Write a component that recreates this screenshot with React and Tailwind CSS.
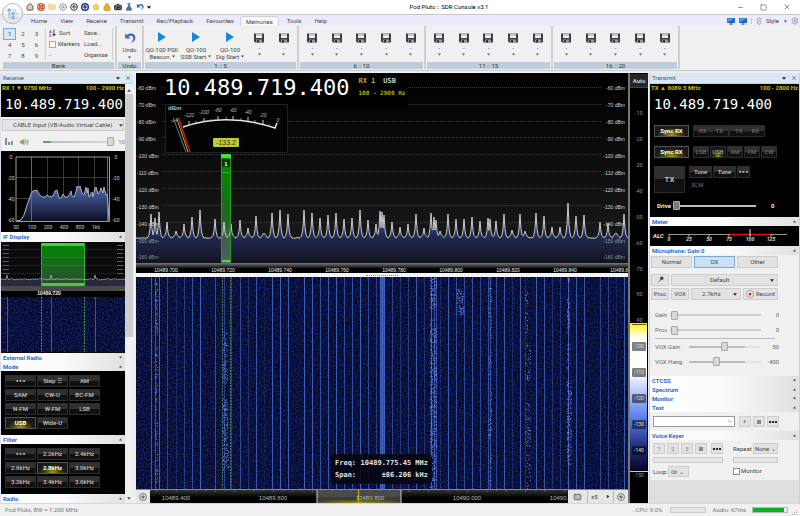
import { useState } from 'react'
import {
  Camera,
  CircleStop,
  FlaskConical,
  Folder,
  House,
  Keyboard,
  LifeBuoy,
  CirclePlay,
  CirclePlus,
  Lock,
  Minus,
  Settings,
  Square,
  Star,
  X,
} from 'lucide-react'

const MONO = "font-['DejaVu_Sans_Mono','Liberation_Mono',monospace]"

const tabs = ['Home', 'View', 'Receive', 'Transmit', 'Rec/Playback', 'Favourites', 'Memories', 'Tools', 'Help']

const modes = ['● ● ●', 'Step ☰', 'AM', 'SAM', 'CW-U', 'BC-FM', 'N-FM', 'W-FM', 'LSB', 'USB', 'Wide-U']
const filters = ['● ● ●', '2.2kHz', '2.4kHz', '2.6kHz', '2.8kHz', '3.0kHz', '3.2kHz', '3.4kHz', '3.6kHz']

// [x, height above the noise floor]
const peaks = [
  [15, 25], [19, 21], [23, 27], [31, 17], [40, 8], [48, 15], [56, 22], [64, 29], [79, 20], [88, 17],
  [95, 15], [104, 19], [112, 11], [120, 23], [128, 5], [136, 26], [144, 29], [152, 25], [168, 29], [176, 26],
  [184, 21], [192, 24], [200, 26], [208, 20], [216, 21], [224, 29], [232, 19], [240, 15], [244, 28], [246, 27],
  [248, 24], [256, 17], [264, 12], [272, 15], [280, 25], [288, 11], [295, 26], [298, 22], [300, 19], [304, 8],
  [312, 25], [320, 20], [328, 20], [336, 22], [344, 18], [352, 21], [354, 20], [360, 18], [368, 25], [376, 9],
  [384, 25], [389, 8], [400, 26], [408, 23], [416, 12], [424, 12], [432, 36], [440, 23], [448, 24], [464, 17],
  [472, 16], [480, 6], [488, 25],
]

const bandwidth = [
  [16, 70], [21, 69], [24, 64], [27, 54], [31, 43], [33, 40], [37, 39], [39, 43], [42, 46], [45, 46],
  [47, 44], [50, 46], [53, 45], [55, 40], [57, 39], [59, 47], [61, 47], [63, 43], [65, 46], [68, 46],
  [71, 40], [72, 45], [74, 46], [76, 41], [77, 35], [79, 37], [80, 35], [82, 42], [84, 44], [86, 36],
  [87, 42], [88, 37], [89, 46], [92, 41], [93, 46], [95, 37], [96, 36], [98, 43], [100, 40], [101, 37],
  [103, 42], [104, 36], [106, 44], [107, 43], [108, 52], [109, 70],
]

function random(seed) {
  let s = seed
  return () => {
    s = (s * 16807) % 2147483647
    return s / 2147483647
  }
}

function spectrumTrace() {
  const rnd = random(91)
  const points = []
  for (let x = 0; x <= 492; x++) {
    let up = rnd() * 1.6
    peaks.forEach(([px, h]) => {
      const d = Math.abs(x - px)
      up = Math.max(up, h * Math.exp(-d * 0.9), 5 * Math.exp(-(d * d) / 8) + rnd() * 0.8)
    })
    points.push(`${x},${(166 - up).toFixed(1)}`)
  }
  return points.join(' ')
}

// bursts of voice and data signals: [x, width, top, bottom, density]
const bursts = [
  [19, 3, 2, 60, 0.6], [19, 3, 70, 135, 0.4], [19, 3, 145, 206, 0.5],
  [87, 5, 54, 108, 0.5], [87, 5, 122, 170, 0.6], [87, 6, 170, 194, 0.6],
  [294, 7, 0, 32, 0.6], [294, 7, 42, 90, 0.6], [294, 7, 90, 212, 0.6],
  [321, 7, 12, 38, 0.6], [353, 3, 0, 212, 0.35], [389, 3, 14, 56, 0.4],
  [389, 6, 66, 104, 0.3], [389, 6, 126, 170, 0.4], [389, 6, 176, 212, 0.2],
  [431, 3, 0, 6, 0.8], [431, 3, 22, 58, 0.7], [431, 4, 66, 92, 0.5],
  [431, 5, 104, 188, 0.6],
]

function speckles() {
  const rnd = random(17)
  const out = []
  bursts.forEach(([x, w, top, bottom, density]) => {
    for (let y = top; y < bottom; y++) {
      for (let i = 0; i < w; i++) {
        if (rnd() < density * 0.75) {
          out.push({ x: x + i, y, o: (0.15 + rnd() * 0.65).toFixed(2) })
        }
      }
    }
  })
  return out
}

const trace = spectrumTrace()
const dots = speckles()

function Caret({ className = '' }) {
  return (
    <svg viewBox="0 0 6 4" className={`w-1 h-[3px] shrink-0 ${className}`}>
      <path d="M0 0h6L3 4z" fill="currentColor" />
    </svg>
  )
}

function Disk() {
  return (
    <svg viewBox="0 0 20 20" className="w-[10px] h-[10px]">
      <path d="M0 1h20v18H2l-2-2z" fill="#3e3e40" />
      <path d="M4 1h12v9H4z" fill="#b9cad8" />
      <path d="M4 6h12v4H4z" fill="#eef3f6" />
      <path d="M4 13h12v6H4z" fill="#9a9a9a" />
      <path d="M6 14h4v5H6z" fill="#333" />
    </svg>
  )
}

function UndoArrow({ className }) {
  return (
    <svg viewBox="0 0 20 20" className={className}>
      <path d="M2 2v9h9L7.500 7.500C12 4.500 16 7 15.500 11c-.2 3-2 5-4 7 5-2 7.500-5 7.500-9C19 3 11 0 5 5z" fill="#3568cf" />
    </svg>
  )
}

function TitleBar() {
  const icon = 'w-2 h-2'
  return (
    <header className="flex items-center h-[14px] bg-white pl-[26px] text-black">
      <div className="flex items-center gap-[3px]">
        <button aria-label="Home"><House className={icon} color="#6b5144" fill="#d9cfc8" strokeWidth={3} /></button>
        <button aria-label="Help"><LifeBuoy className={icon} color="#d4552a" strokeWidth={4} /></button>
        <button aria-label="Open"><Folder className={icon} color="#edcf82" fill="#f7dc9a" /></button>
        <button aria-label="Start"><CirclePlay className={icon} color="#666" /></button>
        <button aria-label="Stop">
          <CircleStop className={icon} color="#333" strokeWidth={3} />
        </button>
        <button aria-label="Add"><CirclePlus className={icon} color="#3338a8" strokeWidth={5} /></button>
        <button aria-label="Favourite"><Star className={icon} color="#eda02c" fill="#fbd35c" /></button>
        <button aria-label="Lock"><Lock className={icon} color="#cf9a26" fill="#e8b33c" strokeWidth={3} /></button>
        <button aria-label="Snapshot"><Camera className={icon} color="#222" fill="#777" strokeWidth={3} /></button>
        <button aria-label="Tests"><FlaskConical className={icon} color="#3f6ea6" fill="#3f6ea6" strokeWidth={2} /></button>
        <button aria-label="Undo"><UndoArrow className={icon} /></button>
        <Caret />
      </div>
      <h1 className="flex-1 text-center pl-[10px]">Pod Pluto :: SDR Console v3.1</h1>
      <div className="flex items-center gap-4 pr-[9px] text-[#555]">
        <button aria-label="Minimise"><Minus className="w-[7px] h-[7px]" /></button>
        <button aria-label="Maximise"><Square className="w-[7px] h-[7px]" /></button>
        <button aria-label="Close"><X className="w-2 h-2" /></button>
      </div>
    </header>
  )
}

function Screen() {
  return (
    <svg viewBox="0 0 16 14" className="w-2 h-[7px]">
      <path d="M0 0h16v10H0z" fill="#2268c8" />
      <path d="M1 1h14L1 8z" fill="#52a4f0" />
      <path d="M5 10h6v4H5z" fill="#888" />
    </svg>
  )
}

function TabBar({ active, onSelect }) {
  return (
    <nav className="flex items-end h-3 bg-[#ebebfb] border-t border-[#c4c4d2] pl-6">
      {tabs.map((tab) => (
        <button
          key={tab}
          onClick={() => onSelect(tab)}
          className={
            tab === active
              ? 'h-[10px] px-[5px] mr-px bg-[#f8f8f8] border border-b-0 border-[#d0d0da] rounded-t-sm'
              : 'h-[10px] pl-[7px] pr-[6px]'
          }
        >
          {tab}
        </button>
      ))}
      <div className="ml-auto flex items-center gap-1 h-[10px] pr-px">
        <Screen />
        <Screen />
        <span className="w-px h-[6px] bg-[#ccc]" />
        <svg viewBox="0 0 12 18" className="w-[6px] h-2" fill="none" stroke="#666">
          <path d="M2 7V4l4-3 4 3v3zM2 11v3l4 3 4-3v-3z" />
        </svg>
        <button className="flex items-center gap-[5px]">
          Style <Caret className="w-[3px] h-[2px]" />
        </button>
        <Settings className="w-2 h-2" color="#888" />
      </div>
    </nav>
  )
}

function Group({ title, children, className = '' }) {
  return (
    <section className={`flex flex-col border-r-2 border-[#cfcfcf] px-px ${className}`}>
      <div className="flex-1 flex pt-[2px]">{children}</div>
      <h2 className="h-[7px] leading-[7px] bg-[#bfccd9] text-center text-[#333]">{title}</h2>
    </section>
  )
}

function Slot({ label }) {
  if (!label) {
    return (
      <button aria-label="Empty memory" className="flex-1 flex flex-col items-center pt-[5px]">
        <Disk />
        <span className="h-2 leading-[8px] mt-px">-</span>
        <Caret className="mt-px w-[3px] h-[2px] text-[#555]" />
      </button>
    )
  }
  return (
    <button className="w-[34px] shrink-0 flex flex-col items-center pt-1">
      <svg viewBox="0 0 8 10" className="w-2 h-[10px]">
        <path d="M0 0l8 5-8 5z" fill="#1b87dc" />
      </svg>
      <span className="mt-1 h-[7px] leading-[7px] whitespace-nowrap">{label[0]}</span>
      <span className="flex items-center gap-[2px] h-[7px] leading-[7px] whitespace-nowrap">
        {label[1]} <Caret className="w-[3px] h-[2px]" />
      </span>
    </button>
  )
}

function Ribbon() {
  const [bank, setBank] = useState(1)
  return (
    <div className="flex h-[45px] bg-[#f0f0f0] border-b border-[#c6c6c6] pl-[2px] pb-px text-[#444]">
      <Group title="Bank" className="w-[115px]">
        <div className="grid grid-cols-3 w-10 h-[33px]">
          {[1, 2, 3, 4, 5, 6, 7, 8, 9].map((n) => (
            <button
              key={n}
              onClick={() => setBank(n)}
              className={n === bank ? 'border border-[#7da7d8] bg-[#d4e6f8]' : ''}
            >
              {n}
            </button>
          ))}
        </div>
        <div className="ml-[2px] pl-[3px] w-[37px] h-8 border-l border-[#d0d0d0] flex flex-col justify-between leading-[10px]">
          <button className="flex items-center gap-[3px]">
            <svg viewBox="0 0 14 16" className="w-[7px] h-2">
              <text x="0" y="7" fontSize="8" fontWeight="700" fill="#2b55b8">A</text>
              <text x="0" y="15" fontSize="8" fontWeight="700" fill="#b83030">Z</text>
              <path d="M9 1h2v9h3l-4 5-4-5h3z" fill="#444" />
            </svg>
            Sort
          </button>
          <label className="flex items-center gap-[2px]">
            <input type="checkbox" className="appearance-none w-[7px] h-[7px] border border-[#aaa] bg-white" />
            Markers
          </label>
          <span>-</span>
        </div>
        <div className="w-[31px] pl-[2px] h-8 border-r border-[#d0d0d0] flex flex-col items-start justify-between leading-[10px]">
          <button>Save...</button>
          <button>Load...</button>
          <button>Organise</button>
        </div>
      </Group>
      <Group title="Undo" className="w-[27px]">
        <button className="flex-1 flex flex-col items-center pt-1">
          <UndoArrow className="w-3 h-3" />
          <span className="mt-[2px] leading-[7px]">Undo</span>
          <Caret className="mt-[3px] w-[3px] h-[2px]" />
        </button>
      </Group>
      <Group title="1 :: 5" className="w-[155px]">
        <Slot label={['QO-100 PSK', 'Beacon']} />
        <Slot label={['QO-100', 'SSB Start']} />
        <Slot label={['QO-100', 'Dig Start']} />
        <Slot />
        <Slot />
      </Group>
      {['6 :: 10', '11 :: 15', '16 :: 20'].map((title) => (
        <Group key={title} title={title} className="w-[127px]">
          <Slot />
          <Slot />
          <Slot />
          <Slot />
          <Slot />
        </Group>
      ))}
    </div>
  )
}

function PanelTitle({ children }) {
  return (
    <div className="flex items-center h-[11px] px-[2px] bg-[#dbe7f2] border-b border-[#c9d3dd] text-[#456]">
      <h2 className="flex-1">{children}</h2>
      <button aria-label={`${children} options`}><Caret className="mr-[5px] text-[#222]" /></button>
      <button aria-label={`Close ${children}`}><X className="w-[6px] h-[6px]" color="#222" /></button>
    </div>
  )
}

function Heading({ children, down }) {
  return (
    <button className="flex items-center w-full h-[9px] pl-[2px] pr-[3px] bg-linear-to-r from-white via-[#fafafa] to-[#e0e0e0] text-[#2a6ad0] font-bold">
      <span className="flex-1 text-left">{children}</span>
      <Caret className={down ? 'w-[3px] h-[2px] text-[#444]' : 'w-[3px] h-[2px] text-[#444] rotate-180'} />
    </button>
  )
}

function DarkButton({ children, on, dim, className = '' }) {
  let look = 'bg-linear-to-b from-[#303030] from-50% to-[#111] to-50% border-[#2c2c2c]'
  if (on) look = 'bg-[radial-gradient(ellipse_at_bottom,#b0a800_0%,#4a4700_35%,#191919_65%)] border-[#555]'
  if (on && dim) look = 'bg-[radial-gradient(ellipse_at_bottom,#b0a800_0%,#4a4700_30%,#191919_60%)] border-[#2c2c2c]'
  let text = on ? 'text-white font-bold' : 'text-[#c8c8c8] font-medium'
  if (dim) text = on ? 'text-[#999] font-medium' : 'text-[#6a6a6a] font-medium'
  if (children === '● ● ●') text = 'text-[#e4e4e4] text-[4px]'
  return (
    <button className={`h-3 border leading-[10px] whitespace-nowrap ${text} ${look} ${className}`}>
      {children}
    </button>
  )
}

function GreyButton({ children, className = '', ...rest }) {
  return (
    <button
      className={`flex items-center justify-center h-3 border border-[#cdcdcd] bg-[#e2e2e2] ${className}`}
      {...rest}
    >
      {children}
    </button>
  )
}

function Ellipsis() {
  return (
    <svg viewBox="0 0 8 2" className="w-2 h-[2px]">
      <path d="M0 0h2v2H0zM3 0h2v2H3zM6 0h2v2H6z" fill="#222" />
    </svg>
  )
}

function Slider({ label, value, max = 100, track = 'from-[#fafafa] to-[#fafafa]', className = '', dark }) {
  return (
    <input
      type="range"
      aria-label={label}
      defaultValue={value}
      max={max}
      className={`appearance-none min-w-0 h-[9px] bg-transparent [&::-webkit-slider-runnable-track]:h-[2px] [&::-webkit-slider-runnable-track]:bg-linear-to-r [&::-webkit-slider-thumb]:appearance-none [&::-webkit-slider-thumb]:w-[7px] [&::-webkit-slider-thumb]:h-[9px] [&::-webkit-slider-thumb]:-mt-1 [&::-webkit-slider-thumb]:border [&::-webkit-slider-thumb]:rounded-[1px] ${
        dark
          ? '[&::-webkit-slider-runnable-track]:bg-[#bbb] [&::-webkit-slider-thumb]:bg-[#777] [&::-webkit-slider-thumb]:border-[#aaa]'
          : '[&::-webkit-slider-thumb]:bg-[#d9d9d9] [&::-webkit-slider-thumb]:border-[#a8a8a8]'
      } ${track} ${className}`}
    />
  )
}

function BandwidthPlot() {
  const line = bandwidth.map((p) => p.join(',')).join(' ')
  return (
    <svg viewBox="1 0 124 81" className="block w-full h-[81px] bg-black">
      <defs>
        <linearGradient id="bw" x1="0" y1="0" x2="0" y2="1">
          <stop offset="0" stopColor="#5068ae" />
          <stop offset="1" stopColor="#0c1024" />
        </linearGradient>
      </defs>
      <g stroke="#3a3a3a">
        {[47, 63, 78, 94].map((x) => <path key={x} d={`M${x + 0.5} 6V70`} />)}
        {[27, 48].map((y) => <path key={y} d={`M16 ${y - 0.5}H109`} />)}
      </g>
      <polygon points={line} fill="url(#bw)" />
      <path d="M31.500 6V70M107.500 6V70" stroke="#787400" />
      <polyline points={line} fill="none" stroke="#a9b0c0" />
      <path d="M16 6H109.500V70.500H16z" fill="none" stroke="#999" />
      <g fill="#ccc" fontSize="5" textAnchor="middle">
        {['0', '-20', '-40', '-60'].map((t, i) => (
          <g key={t}>
            <text x="11" y={8 + i * 21}>{t}</text>
            <text x="116" y={8 + i * 21}>{t}</text>
          </g>
        ))}
        {['50', '100', '200', '400', '800', '1k6'].map((t, i) => (
          <text key={t} x={16 + i * 16} y="78">{t}</text>
        ))}
      </g>
    </svg>
  )
}

function NoiseFilter({ id }) {
  return (
    <filter id={id} x="0" y="0" width="100%" height="100%" colorInterpolationFilters="sRGB">
      <feTurbulence type="fractalNoise" baseFrequency="0.7" numOctaves="2" seed="4" />
      <feColorMatrix values="0.2 0 0 0 -0.06  0.3 0 0 0 -0.08  0.7 0 0 0 -0.1  0 0 0 0 1" />
    </filter>
  )
}

function IfDisplay() {
  const rnd = random(5)
  const pts = []
  for (let x = 1; x <= 125; x++) {
    const near = [7, 51, 95].some((p) => Math.abs(p - x) < 1)
    pts.push(`${x},${near ? 33 : (38 - rnd() * 1.5).toFixed(1)}`)
  }
  return (
    <svg viewBox="1 0 124 111" preserveAspectRatio="none" className="block w-full h-[111px] bg-[#0a0a0a]">
      <defs>
        <linearGradient id="pass" x1="0" y1="0" x2="0" y2="1">
          <stop offset="0" stopColor="#008800" />
          <stop offset="1" stopColor="#2d4a34" />
        </linearGradient>
        <NoiseFilter id="ifNoise" />
      </defs>
      <g stroke="#333" strokeDasharray="1 1">
        {[7, 15, 23, 31].map((y) => <path key={y} d={`M1 ${y}.500H125`} />)}
      </g>
      <g stroke="#5c5c5c" strokeDasharray="1 3" strokeWidth="6">
        <path d="M6 3V34M120 3V34" />
      </g>
      <path d="M1 38H125V44H1z" fill="#252a42" />
      <path d="M41 1H85V44H41z" fill="url(#pass)" />
      <path d="M41 1H85V4H41zM41 41H85V44H41z" fill="#3fd03f" />
      <path d="M41.500 1V44M84.500 1V44" stroke="#35b035" />
      <path d="M41 15.500H85M41 23.500H85" stroke="#3c8a3c" strokeDasharray="1 1" />
      <polyline points={pts.join(' ')} fill="none" stroke="#aaa" strokeWidth="0.8" />
      <path d="M1 44H125V49H1z" fill="#4a4a4a" />
      <path d="M1 49H125V55H1z" fill="#000" />
      <text x="49" y="53" fontSize="5" fontWeight="700" fill="#eee" textAnchor="middle" fontFamily="Liberation Sans">10489.720</text>
      <rect x="1" y="55" width="124" height="55" filter="url(#ifNoise)" />
      <path d="M7.500 55V110M51.500 55V110M95.500 55V110" stroke="#38589a" />
      <path d="M41.500 55V110M84.500 55V110" stroke="#4a9a4a" strokeDasharray="2 1" />
    </svg>
  )
}

function ReceivePanel() {
  return (
    <aside className="w-[133px] shrink-0 flex flex-col border-l border-[#dde]">
      <PanelTitle>Receive</PanelTitle>
      <div className="flex-1 flex">
        <div className="flex-1 min-w-0 bg-[#f0f0f0]">
          <div className="h-[33px] bg-black overflow-hidden">
            <div className="flex justify-between h-2 px-px leading-[8px] font-bold whitespace-nowrap text-[#cfc000]">
              <span>RX 1 ▼ 9750 MHz</span>
              <span>100 - 2900 Hz</span>
            </div>
            <p className={`${MONO} mt-1 pl-1 text-[14px] leading-[16px] text-white`}>10.489.719.400</p>
          </div>

          {/* audio output */}
          <div className="h-[34px] pt-[2px] overflow-hidden">
            <div className="relative mx-px">
              <select aria-label="Output device" className="appearance-none w-full h-3 border border-[#c8c8c8] bg-[#e4e4e4] pl-[10px]">
                <option>CABLE Input (VB-Audio Virtual Cable)</option>
              </select>
              <Caret className="absolute right-px top-[5px]" />
            </div>
            <div className="flex items-center pl-1 pt-[6px]">
              <svg viewBox="0 0 9 7" className="w-[9px] h-[7px]" fill="#8a8a8a">
                <path d="M0 0h2v7H0zM3 4h2v3H3zM6 3h2v4H6z" />
              </svg>
              <svg viewBox="0 0 18 16" className="w-[9px] h-2 ml-[6px]">
                <path d="M0 5h4l5-4v14l-5-4H0z" fill="#a29878" />
                <path d="M11 4c2 3 2 5 0 8M14 2c3 4 3 8 0 12" fill="none" stroke="#58b858" strokeWidth="2" />
              </svg>
              <Slider
                label="Volume"
                value={98}
                className="w-[73px] ml-[14px]"
                track="[&::-webkit-slider-runnable-track]:from-[#5fa860] [&::-webkit-slider-runnable-track]:from-10% [&::-webkit-slider-runnable-track]:via-[#b8c0b8] [&::-webkit-slider-runnable-track]:via-12% [&::-webkit-slider-runnable-track]:to-[#dcdcdc]"
              />
              <span className="ml-[3px] text-[#888]">10</span>
            </div>
          </div>

          <BandwidthPlot />
          <div className="h-[10px]">
            <Heading>IF Display</Heading>
          </div>
          <IfDisplay />
          <Heading down>External Radio</Heading>
          <Heading>Mode</Heading>
          <div className="h-16 bg-black pt-1 pl-1">
            <div className="grid grid-cols-3 gap-x-px gap-y-[2px] w-[95px]">
              {modes.map((m) => (
                <DarkButton key={m} on={m === 'USB'}>{m}</DarkButton>
              ))}
            </div>
          </div>
          <Heading>Filter</Heading>
          <div className="h-[50px] bg-black pt-1 pl-1">
            <div className="grid grid-cols-3 gap-x-px gap-y-[2px] w-[95px]">
              {filters.map((f) => (
                <DarkButton key={f} on={f === '2.8kHz'}>{f}</DarkButton>
              ))}
            </div>
          </div>
          <Heading>Radio</Heading>
        </div>
        <div className="w-2 bg-[#f0f0f0] flex flex-col items-center text-[#555]">
          <Caret className="mt-[5px] rotate-180" />
          <div className="w-full h-[243px] mt-[2px] bg-[#cdcdcd]" />
          <Caret className="mt-auto mb-[3px]" />
        </div>
      </div>
    </aside>
  )
}

function Meter() {
  const marks = [
    ['-120', 53, 44, 52], ['-100', 68, 41, 49], ['-80', 82, 39, 47], ['-60', 97, 39, 47],
    ['-40', 112, 41, 48], ['-20', 127, 44, 51],
  ]
  return (
    <g>
      <path d="M29.500 31.500H151.500V79.500H29.500z" fill="#030303" stroke="#222" />
      <text x="32" y="37" fontSize="6" fontWeight="700" fill="#bbb">dBm</text>
      <g fontSize="5" fontStyle="italic" fill="#bbb" textAnchor="middle">
        <text x="38" y="49">-14</text>
        {marks.map(([t, x, y]) => <text key={t} x={x} y={y}>{t}</text>)}
        <text x="142" y="49">0</text>
      </g>
      <path d="M47 54Q91 39 139 55L141 50" fill="none" stroke="#e8e8e8" strokeWidth="1.500" />
      {marks.map(([t, x, , y]) => <path key={t} d={`M${x} ${y}v-4`} stroke="#ccc" />)}
      <path d="M60 50v-2M75 48v-2M90 46v-2M105 47v-2M119 49v-2M133 53v-2" stroke="#aaa" strokeWidth="0.800" />
      <path d="M38 47L50 79" stroke="#777" />
      <path d="M41 46L52 79" stroke="#b8b020" />
      <path d="M42.500 45L54 79" stroke="#d01818" strokeWidth="1.500" />
      <rect x="77" y="65" width="26" height="9" rx="1" fill="#bccb38" />
      <text x="90" y="72" fontSize="7" fill="#3c4210" textAnchor="middle">-133.2</text>
    </g>
  )
}

function Spectrum() {
  return (
    <div className="relative">
      <svg viewBox="0 0 492 200" preserveAspectRatio="none" className="block w-full h-[200px] font-['Liberation_Sans',sans-serif]">
        <defs>
          <linearGradient id="sky" x1="0" y1="0" x2="0" y2="1">
            <stop offset="0" stopColor="#000" />
            <stop offset="1" stopColor="#1c1c1c" />
          </linearGradient>
          <linearGradient id="floor" gradientUnits="userSpaceOnUse" x1="0" y1="135" x2="0" y2="190">
            <stop offset="0" stopColor="#4c66ac" />
            <stop offset="0.500" stopColor="#222c52" />
            <stop offset="1" stopColor="#12131f" />
          </linearGradient>
          <linearGradient id="tuned" x1="0" y1="0" x2="0" y2="1">
            <stop offset="0" stopColor="#009000" />
            <stop offset="0.500" stopColor="#1c6a1c" />
            <stop offset="1" stopColor="#565a66" />
          </linearGradient>
          <linearGradient id="ruler" x1="0" y1="0" x2="0" y2="1">
            <stop offset="0" stopColor="#777" />
            <stop offset="1" stopColor="#111" />
          </linearGradient>
        </defs>
        <path d="M0 0H492V190H0z" fill="url(#sky)" />
        <g stroke="#3a3a3a" strokeDasharray="1 1">
          {[15, 32, 49, 65, 82, 99, 116, 133, 150, 184].map((y) => (
            <path key={y} d={`M26 ${y - 0.5}H465`} />
          ))}
        </g>
        <path d="M28 0H272V34H28z" fill="#000" />
        <polygon points={`0,190 ${trace} 492,190`} fill="url(#floor)" />
        <g fontSize="5" fill="#d4d4d4">
          {[-60, -70, -80, -90, -100, -110, -120, -130, -140, -150, -160].map((v, i) => (
            <g key={v} opacity={v < -140 ? 0.6 : 1}>
              <text x="1" y={17 + i * 17 - Math.floor(i / 10)}>{v} dBm</text>
              <text x="489" y={17 + i * 17 - Math.floor(i / 10)} textAnchor="end">{v} dBm</text>
            </g>
          ))}
        </g>
        <path d="M85 81H95V190H85z" fill="url(#tuned)" />
        <polyline points={trace} fill="none" stroke="#c8c8cc" />
        <path d="M85.500 81V190M94.500 81V190" stroke="#1fa01f" />
        <path d="M85 81H95V85H85zM86 187H94V189H86z" fill="#45e045" />
        <path d="M86 86H94V94H86z" fill="#033a03" />
        <path d="M86 99.500H94" stroke="#30b030" />
        <text x="90" y="93" fontSize="6" fontWeight="700" fill="#fff" textAnchor="middle">1</text>
        <Meter />
        <path d="M0 190H492V195H0z" fill="url(#ruler)" />
        <path d="M0 195H492V200H0z" fill="#000" />
        <g fontSize="5" fill="#eee" textAnchor="middle">
          {['10489.700', '10489.720', '10489.740', '10489.760', '10489.780', '10489.800', '10489.820', '10489.840', '10489.860'].map((t, i) => (
            <text key={t} x={30 + i * 57} y="199">{t}</text>
          ))}
        </g>
      </svg>
      <div className={`absolute left-7 top-[3px] flex ${MONO}`}>
        <p className="text-[22px] leading-[24px] text-white">10.489.719.400</p>
        <div className="pl-[9px] pt-px font-bold">
          <p className="flex gap-2 text-[7px] leading-[9px]">
            <span className="text-[#b8ac00]">RX 1</span>
            <span className="text-[#ccc]">USB</span>
          </p>
          <p className="mt-[2px] text-[6px] leading-[9px] text-[#b8ac00]">100 - 2900 Hz</p>
        </div>
      </div>
    </div>
  )
}

function Waterfall() {
  return (
    <div className="relative flex-1 flex">
      <svg viewBox="0 0 492 212" preserveAspectRatio="none" className="block w-full h-[212px] grow bg-[#080c34]">
        <defs>
          <NoiseFilter id="noise" />
        </defs>
        <rect width="492" height="212" filter="url(#noise)" />
        {peaks.map(([x, h]) => (
          <path key={x} d={`M${x + 0.5} 0V212`} stroke="#4a70cc" strokeWidth="1" opacity={Math.min(0.85, h / 32)} />
        ))}
        <path d="M245 0H249V212H245z" fill="#4468c4" opacity="0.700" />
        <path d="M86.500 0V212M94.500 0V212" stroke="#4d9a55" strokeDasharray="2 1" opacity="0.800" />
        {dots.map((d, i) => (
          <rect key={i} x={d.x} y={d.y} width="1" height="1" fill="#6c92f0" opacity={d.o} />
        ))}
      </svg>
      <dl className={`absolute left-[195px] bottom-[5px] w-[101px] px-1 py-[3px] rounded-sm bg-[#05060f]/90 ${MONO} text-[7px] leading-[12px] font-bold text-[#e4e4e4]`}>
        <div className="flex justify-between"><dt>Freq:</dt><dd>10489.775.45 MHz</dd></div>
        <div className="flex justify-between"><dt>Span:</dt><dd>±86.206 kHz</dd></div>
      </dl>
    </div>
  )
}

function ZoomIcon() {
  return (
    <svg viewBox="0 0 16 16" className="w-2 h-2" fill="none" stroke="#555">
      <circle cx="8" cy="8" r="7" strokeWidth="1.500" />
      <path d="M4 8h8M8 4v8" strokeWidth="2" />
    </svg>
  )
}

function BandBar() {
  return (
    <div className="flex h-[14px] bg-[#e6e6e6] border-t border-[#888]">
      <button aria-label="Zoom out" className="w-[14px] flex items-center justify-center"><ZoomIcon /></button>
      <svg viewBox="0 0 418 13" preserveAspectRatio="xMinYMid slice" className="flex-1 min-w-0 h-[13px] bg-black font-['Liberation_Sans',sans-serif]">
        <defs>
          <radialGradient id="glow" cx="0.5" cy="1" r="0.6">
            <stop offset="0" stopColor="#a09a00" />
            <stop offset="1" stopColor="#3c3c34" />
          </radialGradient>
          <linearGradient id="band" x1="0" y1="0" x2="0" y2="1">
            <stop offset="0" stopColor="#333" />
            <stop offset="0.600" stopColor="#000" />
          </linearGradient>
        </defs>
        <path d="M0 0H418V13H0z" fill="url(#band)" />
        <path d="M167 0H251V13H167z" fill="#4a4a4a" />
        <path d="M167 7H251V13H167z" fill="url(#glow)" />
        <path d="M167 0V13M251 0V13" stroke="#ccc" />
        <g stroke="#777">
          {Array.from({ length: 43 }, (_, i) => (
            <path key={i} d={`M${7 + i * 9.700} 0v${i % 2 ? 1 : 2}`} strokeWidth="0.600" />
          ))}
        </g>
        <g fontSize="6" fill="#bbb" textAnchor="middle">
          {['10489.400', '10489.600', '10489.800', '10490.000', '10490.200'].map((t, i) => (
            <text key={t} x={26 + i * 97} y="10">{t}</text>
          ))}
        </g>
        <path d="M208.500 0V13" stroke="#c8bc10" />
      </svg>
      <button aria-label="Keyboard" className="w-5 flex items-center justify-center border-r border-[#bbb]">
        <Keyboard className="w-[9px] h-2" color="#444" fill="#bbb" />
      </button>
      <button className="w-[26px] flex items-center justify-center gap-2 border-r border-[#bbb] text-[#333]">
        x5 <Caret className="-rotate-90" />
      </button>
      <button aria-label="Zoom in" className="w-[14px] flex items-center justify-center"><ZoomIcon /></button>
    </div>
  )
}

function ColourScale() {
  return (
    <div className="w-5 shrink-0 border-l-2 border-[#777]">
      <svg viewBox="0 0 18 430" preserveAspectRatio="none" className="block w-full h-full bg-black">
        <defs>
          <linearGradient id="scale" x1="0" y1="0" x2="0" y2="1">
            <stop offset="0" stopColor="#fff000" />
            <stop offset="0.100" stopColor="#fff" />
            <stop offset="0.340" stopColor="#fff" />
            <stop offset="0.620" stopColor="#6488f4" />
            <stop offset="0.820" stopColor="#24358c" />
            <stop offset="1" stopColor="#05082a" />
          </linearGradient>
        </defs>
        <path d="M0 1H18V14H0z" fill="#262626" />
        <path d="M0 14.500H18" stroke="#444" />
        <text x="9" y="10" fontSize="6" fontWeight="700" fill="#ccc" textAnchor="middle">Auto</text>
        <rect y="250" width="17" height="147" fill="url(#scale)" />
        <path d="M2 251.500H16" stroke="#665f00" />
        <path d="M0 398.500H18" stroke="#ccc" />
        <g fontSize="5" textAnchor="middle">
          {Array.from({ length: 15 }, (_, i) => (
            <g key={i}>
              {i > 8 && i < 14 && (
                <rect x="2" y={36 + i * 26 - Math.floor(i / 7)} width="14" height="9" rx="1" fill="#000" opacity="0.500" />
              )}
              <text x="9" y={42 + i * 26 - Math.floor(i / 7)} fill={i > 8 && i < 14 ? '#ddd' : '#999'}>{-10 * (i + 1)}</text>
            </g>
          ))}
        </g>
      </svg>
    </div>
  )
}

function AlcMeter() {
  return (
    <svg viewBox="0 0 149 20" preserveAspectRatio="xMinYMid meet" className="block w-full h-5 bg-black">
      <text x="3" y="12" fontSize="6" fontWeight="700" fontStyle="italic" fill="#eee">ALC</text>
      <path d="M19 8.500H137" stroke="#999" />
      <path d="M79 8.500H121" stroke="#e01010" strokeWidth="1.500" />
      <path d="M100 3V10" stroke="#ddd" />
      {[19, 39, 59, 79, 100, 121].map((x, i) => (
        <g key={x}>
          <path d={`M${x} 8v3`} stroke="#aaa" />
          <text x={x} y="15" fontSize="5" fontWeight="700" fontStyle="italic" fill="#ddd" textAnchor="middle">{i * 25}</text>
        </g>
      ))}
    </svg>
  )
}

function TransmitControls() {
  return (
    <div className="h-[133px] bg-black">
      <div className="flex justify-between h-2 px-px leading-[8px] font-bold text-[#cfc000]">
        <span>TX ▲ 8089.5 MHz</span>
        <span>100 - 2800 Hz</span>
      </div>
      <p className={`${MONO} mt-1 pl-1 text-[14px] leading-[16px] text-white`}>10.489.719.400</p>
      <div className="pl-1 pt-[13px]">
        <div className="flex">
          <DarkButton on className="w-[35px] mr-1">Sync RX</DarkButton>
          <DarkButton dim className="w-9">RX ← TX</DarkButton>
          <DarkButton dim className="w-9">TX ← RX</DarkButton>
        </div>
        <div className="flex mt-[9px]">
          <DarkButton on className="w-[35px] mr-1">Sync RX</DarkButton>
          <DarkButton dim className="w-4 mr-px">LSB</DarkButton>
          <DarkButton on dim className="w-4 mr-px">USB</DarkButton>
          <DarkButton dim className="w-4 mr-px">AM</DarkButton>
          <DarkButton dim className="w-4 mr-px">FM</DarkButton>
          <DarkButton dim className="w-4">CW</DarkButton>
        </div>
        <div className="flex mt-2">
          <DarkButton className="w-[31px] h-[27px] text-[8px]">TX</DarkButton>
          <div className="ml-1">
            <div className="flex gap-px">
              <DarkButton className="w-[23px]">Tone</DarkButton>
              <DarkButton className="w-[23px]">Tune</DarkButton>
              <DarkButton className="w-[13px]">● ● ●</DarkButton>
            </div>
            <p className="pt-[3px] pl-[2px] text-[#777]">3CM</p>
          </div>
        </div>
        <div className="flex items-center pt-2 pl-[3px] font-bold text-[#eee]">
          <span className="w-4">Drive</span>
          <Slider label="Drive" value={0} dark className="w-[83px]" />
          <span className="ml-[15px]">0</span>
        </div>
      </div>
    </div>
  )
}

function LevelRow({ label, value, max, wide, text, track }) {
  return (
    <div className="flex items-center h-[15px] pl-1 text-[#666]">
      <span className={wide ? 'w-[34px]' : 'w-[15px]'}>{label}</span>
      <Slider label={label} value={value} max={max} className={wide ? 'w-[72px]' : 'w-[91px]'} track={track} />
      <span className="w-[18px] text-right">{text}</span>
    </div>
  )
}

function TransmitPanel() {
  const [mic, setMic] = useState('DX')
  const thin = '[&::-webkit-slider-runnable-track]:border [&::-webkit-slider-runnable-track]:border-[#ccc]'
  const half =
    '[&::-webkit-slider-runnable-track]:from-[#bbb] [&::-webkit-slider-runnable-track]:from-78% [&::-webkit-slider-runnable-track]:to-[#e4e4e4] [&::-webkit-slider-runnable-track]:to-78%'
  return (
    <aside className="w-[151px] shrink-0 flex flex-col border-l border-r border-[#c9d3dd] bg-[#f0f0f0]">
      <PanelTitle>Transmit</PanelTitle>
      <TransmitControls />
      <Heading>Meter</Heading>
      <AlcMeter />
      <Heading>Microphone: Gain 0</Heading>

      <div className="h-[121px] pl-px pt-px">
        <div className="flex gap-[2px]">
          {['Normal', 'DX', 'Other'].map((m) => (
            <button
              key={m}
              onClick={() => setMic(m)}
              className={`w-[41px] h-3 border ${m === mic ? 'border-[#7aa8d6] bg-[#cbe2f6]' : 'border-[#cdcdcd] bg-[#e2e2e2]'}`}
            >
              {m}
            </button>
          ))}
        </div>
        <div className="flex gap-[2px] mt-[6px]">
          <GreyButton aria-label="Microphone" className="w-[18px]">
            <svg viewBox="0 0 16 16" className="w-2 h-2">
              <path d="M2 15L9 5l3 3z" fill="#999" />
              <circle cx="11.500" cy="4.500" r="3.500" fill="#444" />
            </svg>
          </GreyButton>
          <div className="relative w-[107px]">
            <select aria-label="Profile" className="appearance-none block w-full h-3 border border-[#cdcdcd] bg-[#e2e2e2] pl-[38px]">
              <option>Default</option>
            </select>
            <Caret className="absolute right-1 top-[5px] text-[#222]" />
          </div>
        </div>
        <div className="flex gap-[2px] mt-[2px]">
          <GreyButton className="w-[18px]">Proc</GreyButton>
          <GreyButton className="w-[18px]">VOX</GreyButton>
          <div className="relative w-[50px]">
            <select aria-label="Bandwidth" className="appearance-none block w-full h-3 border border-[#cdcdcd] bg-[#e2e2e2] pl-[10px]">
              <option>2.7kHz</option>
            </select>
            <Caret className="absolute right-1 top-[5px] text-[#222]" />
          </div>
          <GreyButton className="w-[35px] gap-[2px]">
            <svg viewBox="0 0 16 16" className="w-2 h-2">
              <circle cx="8" cy="8" r="7" fill="#fff" stroke="#777" strokeWidth="1.500" />
              <circle cx="8" cy="8" r="3" fill="#d02020" />
            </svg>
            Record
          </GreyButton>
        </div>
        <div className="mt-[7px]">
          <LevelRow label="Gain" value={0} text="0" track={thin} />
          <LevelRow label="Proc" value={0} text="0" track={thin} />
          <hr className="mx-1 mt-px mr-6 border-[#bbb]" />
          <LevelRow label="VOX Gain" value={49} wide text="50" track={half} />
          <LevelRow label="VOX Hang" value={370} max={1000} wide text="400" track={half} />
        </div>
      </div>

      <Heading down>CTCSS</Heading>
      <Heading>Spectrum</Heading>
      <Heading down>Monitor</Heading>
      <Heading>Text</Heading>
      <div className="flex items-center h-[19px] pl-[3px]">
        <div className="relative w-[82px] mr-1">
          <select aria-label="Text message" className="appearance-none block w-full h-[11px] border border-[#999] bg-white">
            <option></option>
          </select>
          <svg viewBox="0 0 8 5" className="absolute right-[3px] top-1 w-1 h-[3px]" fill="none" stroke="#555">
            <path d="M0 0l4 4 4-4" />
          </svg>
        </div>
        <GreyButton aria-label="Play" className="w-3 h-[11px] mr-[2px] bg-[#cdcdcd]">
          <Caret className="-rotate-90 text-[#888]" />
        </GreyButton>
        <GreyButton aria-label="Stop" className="w-3 h-[11px] mr-[2px] bg-[#cdcdcd]">
          <span className="w-1 h-1 bg-[#888]" />
        </GreyButton>
        <GreyButton aria-label="More" className="w-3 h-[11px]"><Ellipsis /></GreyButton>
      </div>

      <Heading>Voice Keyer</Heading>
      <div className="h-10 pl-[3px] pt-[3px] flex">
        <div className="w-[70px]">
          <div className="flex gap-[2px]">
            {[1, 2, 3].map((n) => (
              <GreyButton key={n} className="w-3 h-[11px] bg-[#cdcdcd] text-[#888]">{n}</GreyButton>
            ))}
            <GreyButton aria-label="Stop keyer" className="w-3 h-[11px] bg-[#cdcdcd]">
              <span className="w-1 h-1 bg-[#888]" />
            </GreyButton>
            <GreyButton aria-label="Keyer options" className="w-3 h-[11px] ml-auto"><Ellipsis /></GreyButton>
          </div>
          <div className="h-[6px] mt-[3px] border border-[#ccc] bg-[#e6e6e6]" />
          <div className="flex items-center mt-[3px]">
            <label htmlFor="loop" className="w-[15px]">Loop:</label>
            <select id="loop" className="appearance-none w-[21px] h-[11px] border border-[#cdcdcd] bg-[#e2e2e2] pl-[2px]">
              <option>∞ ⌄</option>
            </select>
          </div>
        </div>
        <div className="w-[45px] ml-[10px]">
          <div className="flex items-center">
            <label htmlFor="repeat" className="w-5">Repeat</label>
            <select id="repeat" className="appearance-none w-[25px] h-[11px] border border-[#cdcdcd] bg-[#e2e2e2] pl-px">
              <option>None ⌄</option>
            </select>
          </div>
          <div className="h-[6px] mt-[3px] border border-[#ccc] bg-[#e6e6e6]" />
          <label className="flex items-center gap-px mt-1">
            <input type="checkbox" className="appearance-none w-[7px] h-[7px] border border-[#888] bg-white" />
            Monitor
          </label>
        </div>
      </div>
      <div className="flex-1 bg-[#dfdfdf]" />
    </aside>
  )
}

function StatusBar() {
  return (
    <footer className="flex items-center h-[13px] bg-[#f0f0f0] border-t border-[#d8d8d8] pl-[5px] pr-[2px] text-[#777]">
      <span className="flex-1">Pod Pluto, BW = 1.200 MHz</span>
      <span>. CPU: 9.0%</span>
      <div className="w-9 h-[6px] ml-[7px] border border-[#ccc] bg-[#e6e6e6]" />
      <span className="ml-[7px]">Audio: 67ms</span>
      <div className="w-9 h-[6px] ml-[6px] border border-[#bbb] bg-[#e6e6e6]">
        <div className="w-[31px] h-1 bg-[#0cb022]" />
      </div>
      <svg viewBox="0 0 6 6" className="w-[6px] h-[6px] ml-1 self-end" fill="#aaa">
        <path d="M4 0h1v1H4zM2 2h1v1H2zM4 2h1v1H4zM0 4h1v1H0zM2 4h1v1H2zM4 4h1v1H4z" />
      </svg>
    </footer>
  )
}

export default function App() {
  const [tab, setTab] = useState('Memories')

  return (
    <div className="relative min-h-screen flex flex-col bg-[#eeeef4] font-['Roboto','Open_Sans',sans-serif] text-[6px] leading-[8px] text-[#444]">
      <TitleBar />
      <TabBar active={tab} onSelect={setTab} />
      <Ribbon />

      {/* application menu */}
      <button
        aria-label="Application menu"
        className="absolute left-[2px] top-[3px] w-[21px] h-[21px] rounded-full border border-[#b4b4b4] bg-linear-to-b from-white to-[#e4e4e4] flex items-center justify-center"
      >
        <svg viewBox="0 0 24 24" className="w-3 h-3" fill="none" stroke="#7ea4cc" strokeWidth="1.500">
          <path d="M4 4v16h6M4 12h6" />
          <path d="M2 2h5v4H2zM10 9h5v5h-5zM10 17h5v5h-5z" fill="#a9cbeb" />
          <path d="M10 4h10M18 12h5M18 20h5" strokeDasharray="2 1" />
        </svg>
      </button>

      <main className="flex-1 flex pt-[2px]">
        <ReceivePanel />
        <section className="flex-1 min-w-0 flex flex-col ml-[3px]">
          <Spectrum />
          <div className="h-1 bg-[#f4f4f4] flex items-center justify-center">
            <span className="w-8 border-t border-dotted border-[#888]" />
          </div>
          <Waterfall />
          <BandBar />
        </section>
        <ColourScale />
        <div className="w-px" />
        <TransmitPanel />
      </main>

      <StatusBar />
    </div>
  )
}
